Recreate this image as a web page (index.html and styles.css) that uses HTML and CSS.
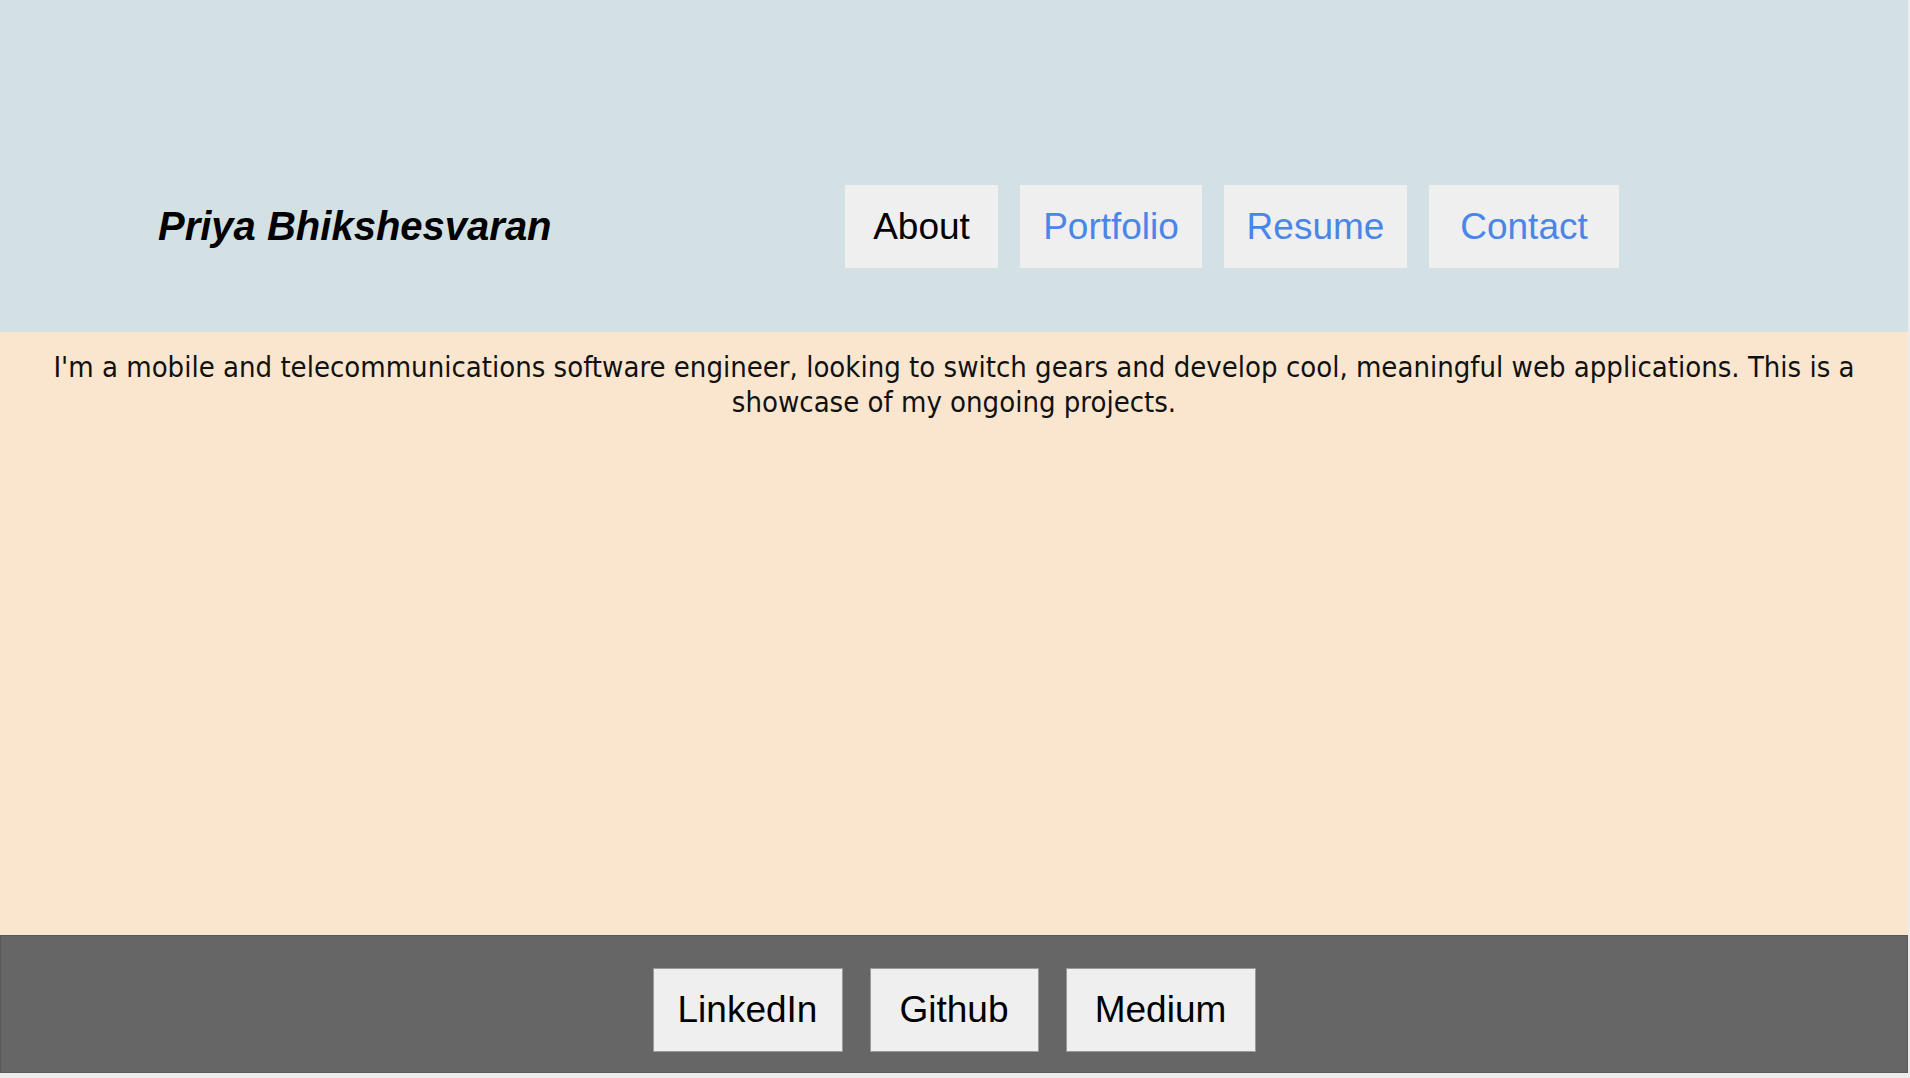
FILE: index.html
```html
<!DOCTYPE html>
<html lang="en">
<head>
<meta charset="utf-8">
<title>Priya Bhikshesvaran</title>
<link rel="stylesheet" href="styles.css">
</head>
<body>
<div class="page">
  <header class="header">
    <div class="header-row">
      <h1 class="name">Priya Bhikshesvaran</h1>
      <nav class="nav">
        <a class="nav-btn nav-about" href="#">About</a>
        <a class="nav-btn nav-link nav-portfolio" href="#">Portfolio</a>
        <a class="nav-btn nav-link nav-resume" href="#">Resume</a>
        <a class="nav-btn nav-link nav-contact" href="#">Contact</a>
      </nav>
    </div>
  </header>
  <main class="main">
    <p class="intro">I'm a mobile and telecommunications software engineer, looking to switch gears and develop cool, meaningful web applications. This is a showcase of my ongoing projects.</p>
  </main>
  <footer class="footer">
    <a class="foot-btn foot-linkedin" href="#">LinkedIn</a>
    <a class="foot-btn foot-github" href="#">Github</a>
    <a class="foot-btn foot-medium" href="#">Medium</a>
  </footer>
</div>
</body>
</html>
```

FILE: styles.css
```css
html, body {
  margin: 0;
  padding: 0;
}
body {
  background: #ececec;
  height: 1078px;
  overflow: hidden;
}
.page {
  width: 1908px;
  display: flex;
  flex-direction: column;
}
.header {
  background: #d3e0e4;
  height: 332px;
  box-sizing: border-box;
  padding: 185px 0 0 158px;
}
.header-row {
  display: flex;
  align-items: center;
  gap: 296px;
}
.name {
  margin: 0;
  font-family: "Liberation Sans", Arial, sans-serif;
  font-weight: bold;
  font-style: italic;
  font-size: 40px;
  color: #000;
  width: 391px;
  white-space: nowrap;
}
.nav {
  display: flex;
  gap: 22px;
}
.nav-btn {
  display: flex;
  align-items: center;
  justify-content: center;
  height: 83px;
  background: #efefef;
  font-family: "Liberation Sans", Arial, sans-serif;
  font-size: 37px;
  color: #000;
  text-decoration: none;
}
.nav-link {
  color: #4a86e8;
}
.nav-about { width: 153px; }
.nav-portfolio { width: 182px; }
.nav-resume { width: 183px; }
.nav-contact { width: 190px; }
.main {
  background: #fae6cf;
  height: 603px;
  box-sizing: border-box;
  padding: 18px 40px 0 40px;
}
.intro {
  margin: 0;
  text-align: center;
  font-family: "DejaVu Sans Condensed", "DejaVu Sans", sans-serif;
  font-size: 29px;
  line-height: 35px;
  color: #111;
}
.footer {
  background: #666666;
  height: 138px;
  box-sizing: border-box;
  border: 1px solid #5a5a5a;
  display: flex;
  justify-content: center;
  align-items: flex-start;
  gap: 27px;
  padding-top: 32px;
}
.foot-btn {
  display: flex;
  align-items: center;
  justify-content: center;
  height: 84px;
  box-sizing: border-box;
  background: #efefef;
  border: 1px solid #9a9a9a;
  font-family: "Liberation Sans", Arial, sans-serif;
  font-size: 37px;
  color: #000;
  text-decoration: none;
}
.foot-linkedin { width: 190px; }
.foot-github { width: 169px; }
.foot-medium { width: 190px; }
```
